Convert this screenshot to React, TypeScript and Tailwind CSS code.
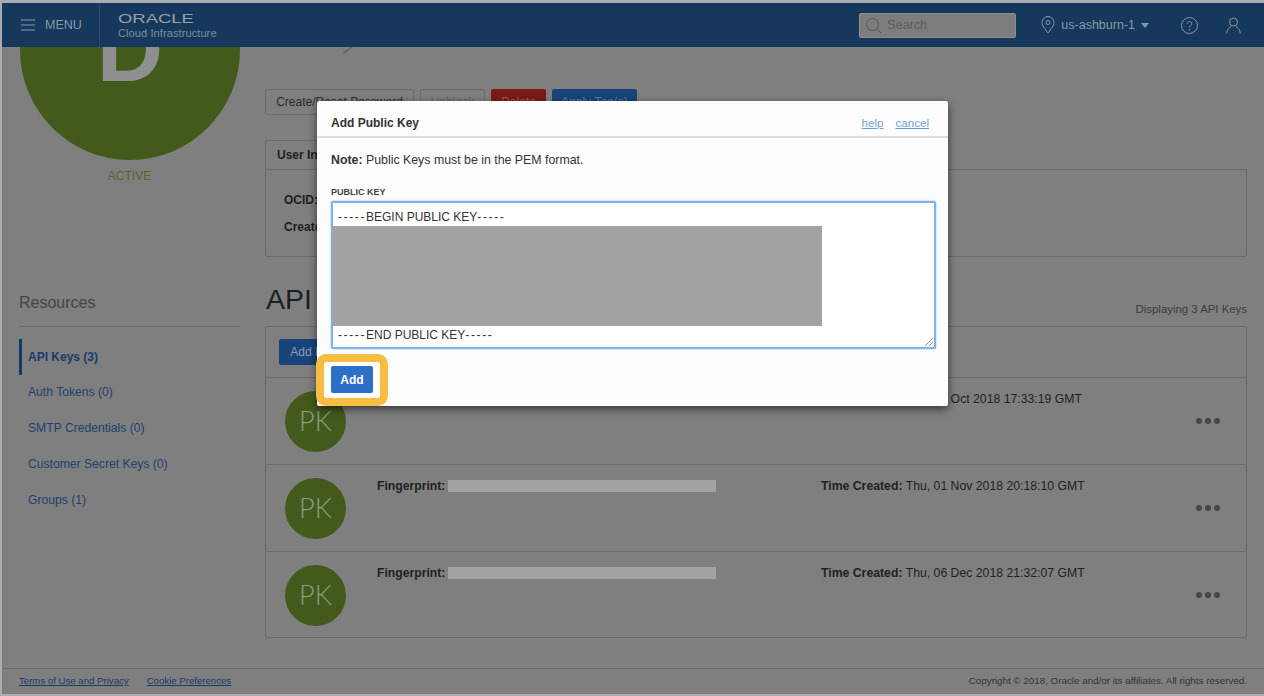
import React from "react";

const Row = ({ time, showPrint = true }: { time: string; showPrint?: boolean }) => (
  <div className="flex h-[87px] border-b border-[#6b6b6b] last:border-b-0 last:h-[85px]">
    <div className="ml-[19px] mt-[13px] flex h-[61px] w-[61px] items-center justify-center rounded-full bg-[#435a1c] font-['Lato',sans-serif] text-[27px] font-light text-[#8f9a80]">
      PK
    </div>
    <div className="ml-[31px] flex w-[444px] pt-[13px]">
      {showPrint && (
        <>
          <span className="text-[12.2px] leading-[16px] font-bold text-[#1f1f1f]">Fingerprint:</span>
          <span className="ml-[3px] mt-[2px] h-[12px] w-[268px] bg-[#a3a3a3]" />
        </>
      )}
    </div>
    <div className="pt-[13px] text-[12.25px] leading-[16px] text-[#222222]">
      <b>Time Created:</b> {time}
    </div>
    <div className="ml-auto mr-[26px] mt-[40px] flex h-[6px] gap-[3px]">
      <span className="h-[6px] w-[6px] rounded-full bg-[#484848]" />
      <span className="h-[6px] w-[6px] rounded-full bg-[#484848]" />
      <span className="h-[6px] w-[6px] rounded-full bg-[#484848]" />
    </div>
  </div>
);

const NavItem = ({ label, active = false }: { label: string; active?: boolean }) => (
  <div
    className={
      active
        ? "flex h-[36px] items-center border-l-[3px] border-[#143a6b] pb-[1px] pl-[6px] text-[12px] font-bold text-[#163b6b]"
        : "flex h-[36px] items-center pb-[1px] pl-[9px] text-[12.15px] text-[#1e4170]"
    }
  >
    {label}
  </div>
);

export default function App() {
  return (
    <div className="relative h-[696px] w-[1264px] overflow-hidden bg-[#a9adb1] pl-[2px] pt-[3px] pb-[2px] font-['Liberation_Sans',Arial,sans-serif]">
      <div className="flex h-[691px] flex-col bg-[#7f7f7f]">
        {/* Top bar */}
        <header className="z-10 flex h-[44px] shrink-0 items-center bg-[#15385c] text-[#8b97a4]">
          <div className="flex h-full w-[98px] items-center border-r border-[#2c4c6e] pl-[19px]">
            <svg width="14" height="12" viewBox="0 0 14 12" stroke="#8b97a4" strokeWidth="1">
              <path d="M0 1h14M0 6h14M0 11h14" />
            </svg>
            <span className="ml-[10px] text-[12.5px]">MENU</span>
          </div>
          <div className="ml-[18px] flex h-full flex-col">
            <span className="mt-[8px] h-[15px] origin-left scale-x-[1.42] text-[13px] leading-[15px] text-[#97a1ac]">
              ORACLE
            </span>
            <span className="mt-[1px] text-[11px] leading-[13px] tracking-[0.1px] text-[#7f8d9c]">
              Cloud Infrastructure
            </span>
          </div>
          <div className="ml-auto flex h-[25px] w-[157px] items-center rounded-[2px] border border-[#8f8f8f] bg-[#7d7d7d] pl-[5px] text-[12.5px] text-[#5c5c5c]">
            <svg width="17" height="17" viewBox="0 0 17 17" fill="none" stroke="#565656" strokeWidth="1">
              <circle cx="7.5" cy="7.5" r="6" />
              <path d="M12 12l4 4" />
            </svg>
            <span className="ml-[5px]">Search</span>
          </div>
          <svg className="ml-[25px]" width="14" height="18" viewBox="0 0 14 18" fill="none" stroke="#8b97a4" strokeWidth="1">
            <path d="M7 17C4 12.5 1 10 1 6.5a6 6 0 0 1 12 0C13 10 10 12.5 7 17z" />
            <circle cx="7" cy="6.5" r="2" />
          </svg>
          <span className="ml-[6px] text-[12.5px]">us-ashburn-1</span>
          <span className="ml-[6px] h-0 w-0 border-x-[4.5px] border-t-[5px] border-x-transparent border-t-[#8b97a4]" />
          <svg className="ml-[32px]" width="17" height="17" viewBox="0 0 17 17" fill="none" stroke="#8b97a4" strokeWidth="1">
            <circle cx="8.5" cy="8.5" r="8" />
            <path d="M6.3 6.6a2.2 2.2 0 1 1 3.4 1.9c-.8.5-1.2.9-1.2 1.9M8.5 12v1.2" />
          </svg>
          <svg className="ml-[28px] mr-[23px]" width="15" height="17" viewBox="0 0 15 17" fill="none" stroke="#8b97a4" strokeWidth="1">
            <circle cx="7.5" cy="5" r="4" />
            <path d="M.6 16.5c.6-4 3-6.5 4.6-7.3M14.4 16.5c-.6-4-3-6.5-4.6-7.3" />
          </svg>
        </header>

        {/* Body */}
        <div className="flex min-h-0 flex-1 overflow-hidden">
          <aside className="ml-[17px] w-[221px] shrink-0">
            <div className="-mt-[107px] ml-[1px] flex h-[220px] w-[220px] items-center justify-center rounded-full bg-[#435a1c] text-[92px] leading-[220px] font-bold text-[#8f8f8f]">
              <span className="relative -top-[1px] h-[220px]">D</span>
            </div>
            <div className="mt-[8px] h-[16px] text-center text-[12px] leading-[16px] text-[#4f6b26]">ACTIVE</div>
            <div className="mt-[109px] h-[34px] border-b border-[#6b6b6b] text-[16px] leading-[20px] text-[#444444]">
              Resources
            </div>
            <nav className="mt-[12px]">
              <NavItem label="API Keys (3)" active />
              <NavItem label="Auth Tokens (0)" />
              <NavItem label="SMTP Credentials (0)" />
              <NavItem label="Customer Secret Keys (0)" />
              <NavItem label="Groups (1)" />
            </nav>
          </aside>

          <main className="ml-[25px] mr-[17px] min-w-0 flex-1">
            <div className="ml-[78px] h-[7px]">
              <svg width="10" height="7" viewBox="0 0 10 7" fill="#6a6a6a">
                <path d="M7 0h3L3 6 0 7l1-3z" />
              </svg>
            </div>
            <div className="mt-[35px] flex h-[26px] gap-[6px] text-[12px]">
              <span className="flex w-[149px] items-center justify-center rounded-[2px] border border-[#6c6c6c] text-[#2b2b2b]">
                Create/Reset Password
              </span>
              <span className="flex w-[65px] items-center justify-center rounded-[2px] border border-[#6c6c6c] text-[#666666]">
                Unblock
              </span>
              <span className="flex w-[55px] items-center justify-center rounded-[2px] bg-[#7a1a14] text-[#9c5a55]">
                Delete
              </span>
              <span className="flex w-[85px] items-center justify-center rounded-[2px] bg-[#17447a] text-[#5f7da0]">
                Apply Tag(s)
              </span>
            </div>
            <div className="mt-[25px] flex h-[29px] w-[150px] items-center rounded-t-[2px] border border-b-0 border-[#6b6b6b] pl-[11px] text-[12px] font-bold text-[#1f1f1f]">
              User Information
            </div>
            <div className="h-[88px] rounded-b-[2px] border border-[#6b6b6b] pl-[18px] pt-[22px] text-[12px] font-bold leading-[16px] text-[#1f1f1f]">
              <div>OCID:</div>
              <div className="mt-[11px]">Created:</div>
            </div>
            <div className="mt-[26px] flex h-[43px] justify-between">
              <h1 className="pl-[1px] text-[28.5px] leading-[33px] text-[#1e1e1e]">API Keys</h1>
              <span className="mt-[18px] text-[11.4px] leading-[16px] text-[#3d3d3d]">Displaying 3 API Keys</span>
            </div>
            <div className="h-[312px] rounded-[2px] border border-[#6b6b6b]">
              <div className="h-[51px] border-b border-[#6b6b6b] pl-[13px] pt-[12px]">
                <span className="flex h-[26px] w-[104px] items-center justify-center rounded-[2px] bg-[#17447a] text-[12px] text-[#8a9db5]">
                  Add Public Key
                </span>
              </div>
              <Row time="Thu, 25 Oct 2018 17:33:19 GMT" showPrint={false} />
              <Row time="Thu, 01 Nov 2018 20:18:10 GMT" />
              <Row time="Thu, 06 Dec 2018 21:32:07 GMT" />
            </div>
          </main>
        </div>

        {/* Footer */}
        <footer className="flex h-[26px] shrink-0 items-center justify-between border-t border-[#6b6b6b] pl-[17px] pr-[17px]">
          <div className="flex gap-[18px] text-[9.65px] text-[#17396a] underline">
            <span>Terms of Use and Privacy</span>
            <span>Cookie Preferences</span>
          </div>
          <span className="text-[9.8px] text-[#333333]">Copyright © 2018, Oracle and/or its affiliates. All rights reserved.</span>
        </footer>
      </div>

      {/* Modal */}
      <div className="absolute left-[317px] top-[101px] z-20 flex h-[305px] w-[631px] flex-col rounded-[2px] bg-[#fdfdfd] shadow-[0_3px_8px_rgba(0,0,0,0.6)]">
        <div className="flex h-[37px] shrink-0 items-center justify-between border-b-2 border-[#dddddd] pl-[14px] pr-[19px] pt-[9px]">
          <span className="text-[12px] font-bold text-[#333333]">Add Public Key</span>
          <div className="flex gap-[12px] text-[11.6px] text-[#6f9fdc] underline">
            <span>help</span>
            <span>cancel</span>
          </div>
        </div>
        <div className="mt-[14px] pl-[14px] text-[12.35px] leading-[16px] text-[#333333]">
          <b>Note:</b> Public Keys must be in the PEM format.
        </div>
        <div className="mt-[19px] pl-[14px] text-[9px] leading-[11px] font-bold text-[#444444]">PUBLIC KEY</div>
        <div className="relative ml-[14px] mt-[3px] flex h-[148px] w-[605px] flex-col justify-between rounded-[2px] border-2 border-[#7fb3ee] bg-white pb-[4px] pl-[5px] pt-[6px] text-[12px] leading-[16px] text-[#333333] shadow-[0_0_2px_#7fb3ee]">
          <div>
            <span className="tracking-[1.6px]">-----</span>BEGIN PUBLIC KEY<span className="tracking-[1.6px]">-----</span>
          </div>
          <div>
            <span className="tracking-[1.6px]">-----</span>END PUBLIC KEY<span className="tracking-[1.6px]">-----</span>
          </div>
          <div className="absolute left-[-1px] top-[23px] h-[100px] w-[490px] bg-[#a3a3a3]" />
          <svg className="absolute bottom-[1px] right-[1px]" width="9" height="9" viewBox="0 0 9 9" stroke="#8a8a8a" strokeWidth="1">
            <path d="M1 9l8-8M5 9l4-4" />
          </svg>
        </div>
        <div className="ml-[14px] mt-[17px] flex h-[27px] w-[42px] items-center justify-center rounded-[2px] bg-[#2b6fc9] text-[12px] font-bold text-white">
          Add
        </div>
        <div className="pointer-events-none absolute -left-[1px] top-[253px] h-[52px] w-[72px] rounded-[10px] border-[8px] border-[#f6bd41]" />
      </div>
    </div>
  );
}
